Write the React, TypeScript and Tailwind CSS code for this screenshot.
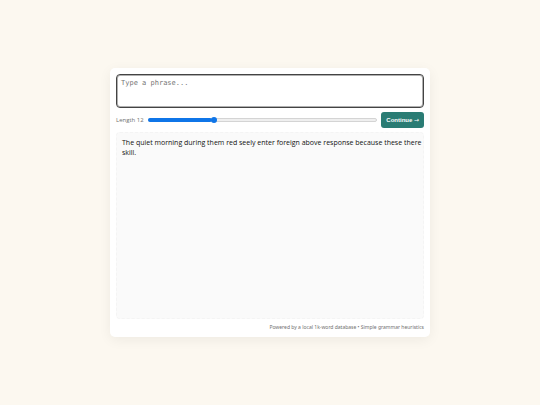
import { useState } from 'react';
import type { ChangeEvent } from 'react';

const MIN_LENGTH = 5;
const MAX_LENGTH = 30;

const trackStyles =
  '[&::-webkit-slider-runnable-track]:h-1 [&::-webkit-slider-runnable-track]:rounded-full [&::-webkit-slider-runnable-track]:border [&::-webkit-slider-runnable-track]:border-[#d4d4d4] [&::-webkit-slider-runnable-track]:bg-[#efefef]';

const thumbStyles =
  '[&::-webkit-slider-thumb]:-mt-0.5 [&::-webkit-slider-thumb]:size-1.5 [&::-webkit-slider-thumb]:appearance-none [&::-webkit-slider-thumb]:rounded-full [&::-webkit-slider-thumb]:bg-[#0f75e8]';

function LengthSlider({ value, onChange }: { value: number; onChange: (value: number) => void }) {
  const percent = ((value - MIN_LENGTH) / (MAX_LENGTH - MIN_LENGTH)) * 100;

  return (
    <div className="relative flex h-1.5 min-w-0 flex-1 items-center">
      <input
        id="length"
        type="range"
        min={MIN_LENGTH}
        max={MAX_LENGTH}
        value={value}
        onChange={(e: ChangeEvent<HTMLInputElement>) => onChange(Number(e.target.value))}
        className={`block h-1.5 w-full appearance-none bg-transparent outline-none ${trackStyles} ${thumbStyles}`}
      />
      {/* filled part of the track */}
      <div
        className="pointer-events-none absolute top-px left-0 h-1 rounded-full bg-[#0f75e8]"
        style={{ width: `${percent}%` }}
      />
    </div>
  );
}

export default function App() {
  const [phrase, setPhrase] = useState('');
  const [length, setLength] = useState(12);

  return (
    <div className="flex min-h-screen items-center justify-center bg-[#fcf8f0] font-['Open_Sans',sans-serif] text-[#111111]">
      <main className="flex w-full max-w-80 flex-col rounded-[5px] bg-white p-1.5 shadow-[0_3px_13px_rgba(0,0,0,0.06)]">
        <textarea
          aria-label="Phrase"
          placeholder="Type a phrase..."
          value={phrase}
          onChange={(e) => setPhrase(e.target.value)}
          className="block h-[34px] w-full resize-none rounded-[4px] border border-[#444444] bg-white px-1 py-1 font-['DejaVu_Sans_Mono',monospace] text-[7px] leading-[8px] shadow-[inset_0_0_0_1px_#b0b0b0] outline-none placeholder:text-[#757575]"
        />

        <div className="mt-1 flex items-center gap-1">
          <label htmlFor="length" className="text-[6px] leading-[8px] whitespace-nowrap text-[#707070]">
            Length {length}
          </label>
          <LengthSlider value={length} onChange={setLength} />
          <button
            type="button"
            className="h-4 rounded-[3px] bg-[#2a7c74] px-[5px] font-['Liberation_Sans',sans-serif] text-[6px] leading-[8px] font-bold whitespace-nowrap text-white"
          >
            Continue <span className="font-['DejaVu_Sans',sans-serif] font-normal">→</span>
          </button>
        </div>

        <output
          htmlFor="length"
          className="mt-1 block min-h-[187px] rounded-[4px] border border-dashed border-[#f4f4f4] bg-[#fafafa] py-[5px] pr-0 pl-[5px] text-[7px] leading-[10px]"
        >
          The quiet morning during them red seely enter foreign above response because these there skill.
        </output>

        <footer className="mt-1 text-right font-['Noto_Sans',sans-serif] text-[5px] leading-[8px] text-[#707070]">
          Powered by a local 1k-word database • Simple grammar heuristics
        </footer>
      </main>
    </div>
  );
}
